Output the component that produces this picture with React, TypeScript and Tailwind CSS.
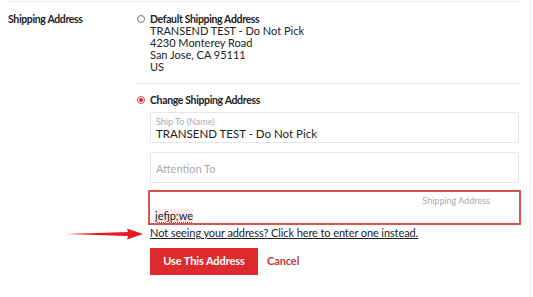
import React from "react";

export default function App() {
  const font = { fontFamily: 'Lato, "Open Sans", Arial, sans-serif' };
  return (
    <div className="w-[533px] h-[297px] bg-white overflow-hidden text-[#222]" style={font}>
      <div className="w-[531px] h-[297px] border-r border-[#ececec] relative">
        <div className="ml-[7px] mt-[1px] w-[513px] h-px bg-[#e8e8e8]" />
        <div className="flex pt-[11px]">
          <div className="w-[136px] pl-[8px] text-[10.5px] leading-[12px] font-bold tracking-[-0.35px]">
            Shipping Address
          </div>
          <div className="flex flex-col w-[384px]">
            <div className="flex items-start">
              <div className="mt-[2px] ml-[0.5px] w-[8px] h-[8px] rounded-full border border-[#777] bg-white" />
              <div className="ml-[5.5px] text-[11px] leading-[12px]">
                <div className="font-bold text-[10.5px] tracking-[-0.35px]">Default Shipping Address</div>
                <div>TRANSEND TEST - Do Not Pick</div>
                <div>4230 Monterey Road</div>
                <div>San Jose, CA 95111</div>
                <div>US</div>
              </div>
            </div>
            <div className="mt-[10px] h-px bg-[#e8e8e8]" />
            <div className="flex items-start mt-[10px]">
              <div className="mt-[2px] ml-[0.5px] w-[8px] h-[8px] rounded-full border border-[#e24a4a] bg-white flex items-center justify-center">
                <div className="w-[4px] h-[4px] rounded-full bg-[#e0262c]" />
              </div>
              <div className="ml-[5.5px] text-[10.5px] leading-[12px] font-bold tracking-[-0.35px]">
                Change Shipping Address
              </div>
            </div>
            <div className="ml-[14px] w-[369px] mt-[6px] h-[31px] border border-[#e6e6e6] flex flex-col px-[5px] pt-[3px]">
              <div className="text-[9px] leading-[11px] text-[#aaa]">Ship To (Name)</div>
              <div className="text-[11.5px] leading-[13px]">TRANSEND TEST - Do Not Pick</div>
            </div>
            <div className="ml-[14px] w-[369px] mt-[9px] h-[31px] border border-[#e6e6e6] flex items-center px-[5px]">
              <div className="text-[11px] leading-[12px] text-[#aaa] mt-[2px]">Attention To</div>
            </div>
            <div className="ml-[12px] w-[373px] mt-[7px] h-[35px] border-2 border-[#d9534f] flex flex-col px-[5px]">
              <div className="text-right pr-[24px] pt-[4px] text-[9px] leading-[10px] text-[#aaa]">
                Shipping Address
              </div>
              <div className="text-[11px] leading-[13px] mt-[3px]">
                <span className="bg-[#fde9ea] underline decoration-dotted decoration-[#e0262c] decoration-[1px] underline-offset-2">
                  jefjp;we
                </span>
              </div>
            </div>
            <div className="ml-[14px] mt-[2px] text-[11px] leading-[12px] underline tracking-[-0.1px] text-[#222]">
              Not seeing your address? Click here to enter one instead.
            </div>
            <div className="ml-[14px] mt-[9px] flex items-center">
              <div className="w-[108px] h-[27px] bg-[#dd2a2c] text-white text-[11px] font-bold flex items-center justify-center tracking-[-0.1px]">
                Use This Address
              </div>
              <div className="ml-[9px] text-[11px] font-bold text-[#c33a3a] tracking-[-0.1px]">Cancel</div>
            </div>
          </div>
        </div>
        <svg className="absolute left-[66px] top-[227px]" width="78" height="12" viewBox="0 0 78 12">
          <polygon points="0,6 62,4 61,0.5 77,6 61,11.5 62,8" fill="#e8191f" />
        </svg>
      </div>
    </div>
  );
}
